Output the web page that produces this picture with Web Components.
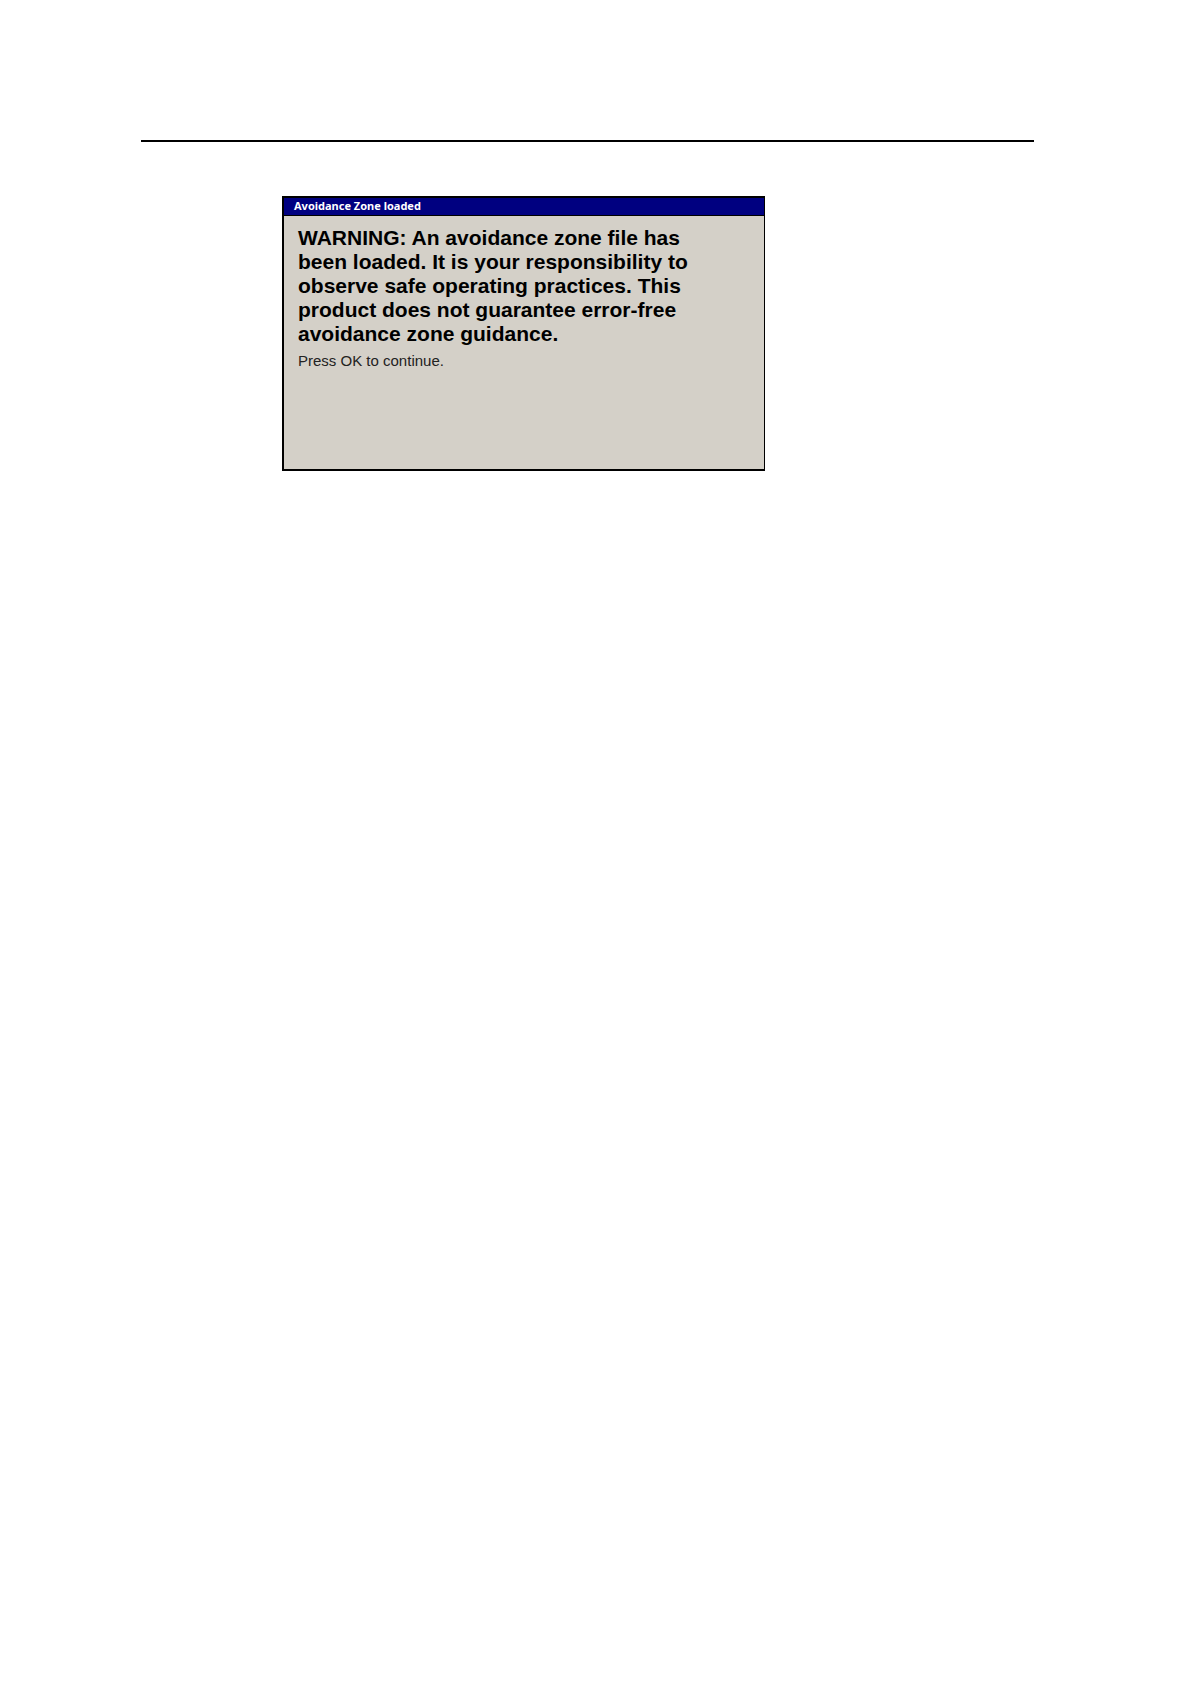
<!DOCTYPE html>
<html lang="en">
<head>
<meta charset="utf-8">
<title>Avoidance Zone loaded</title>
<style>
body { margin: 0; background: #fff; }
</style>
</head>
<body>
<manual-page>
  <message-dialog>
    <span slot="title">Avoidance Zone loaded</span>
    <warning-text slot="warning">WARNING: An avoidance zone file has<br>been loaded. It is your responsibility to<br>observe safe operating practices. This<br>product does not guarantee error-free<br>avoidance zone guidance.</warning-text>
    <span>Press OK to continue.</span>
  </message-dialog>
</manual-page>
<script>
class ManualPage extends HTMLElement {
  constructor() {
    super();
    this.attachShadow({ mode: "open" }).innerHTML = `
      <style>
        :host { display: block; box-sizing: border-box; min-height: 100vh; padding: 140px 156px 0 141px; }
        hr { margin: 0; border: 0; height: 2px; background: #000; }
        main { padding: 54px 0 0 141px; }
      </style>
      <hr>
      <main><slot></slot></main>`;
  }
}
class WarningText extends HTMLElement {
  constructor() {
    super();
    this.attachShadow({ mode: "open" }).innerHTML = `
      <style>
        :host { display: block; font: bold 21px/24px "Liberation Sans", Arial, sans-serif; color: #000; white-space: nowrap; }
      </style>
      <slot></slot>`;
  }
}
class MessageDialog extends HTMLElement {
  constructor() {
    super();
    this.attachShadow({ mode: "open" }).innerHTML = `
      <style>
        :host { display: block; }
        section { box-sizing: border-box; max-width: 483px; min-height: 275px; border: solid #000; border-width: 2px 1px 2px 2px; background: #d4d0c8; }
        h1 { margin: 0; padding: 0 10px 2px; background: #000080; color: #fff; border-bottom: 1px solid #000; font: bold 11px/15px "Noto Sans", "Open Sans", sans-serif; }
        .body { padding: 10px 14px; }
        p { margin: 5px 0 0; font: 15px/20px "Liberation Sans", Arial, sans-serif; color: #222; }
      </style>
      <section role="alertdialog" aria-labelledby="title">
        <h1 id="title"><slot name="title"></slot></h1>
        <div class="body">
          <slot name="warning"></slot>
          <p><slot></slot></p>
        </div>
      </section>`;
  }
}
customElements.define("manual-page", ManualPage);
customElements.define("warning-text", WarningText);
customElements.define("message-dialog", MessageDialog);
</script>
</body>
</html>
